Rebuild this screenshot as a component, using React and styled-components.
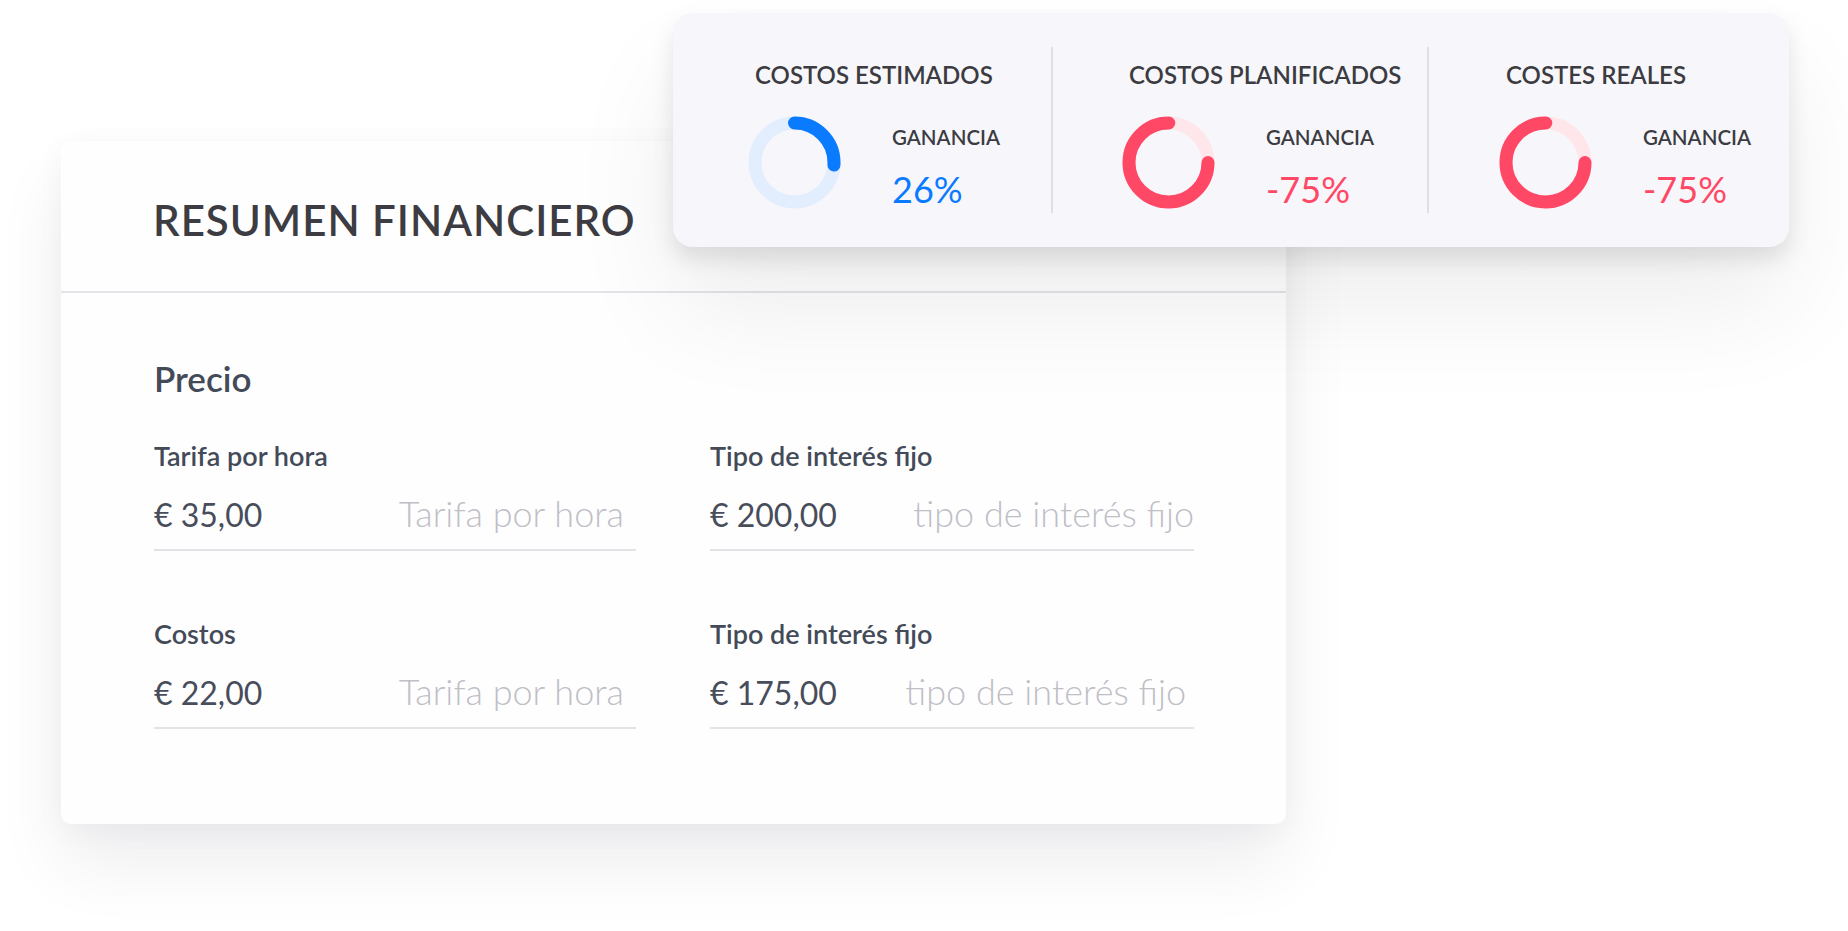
import React from "react";
import styled, { createGlobalStyle } from "styled-components";

const Global = createGlobalStyle`
  html, body { margin: 0; padding: 0; background: #ffffff; }
  body { font-family: Lato, "Noto Sans", sans-serif; -webkit-font-smoothing: antialiased; }
  * { box-sizing: border-box; }
`;

const Stage = styled.div`
  position: relative;
  width: 1848px;
  height: 931px;
  overflow: hidden;
  padding: 141px 0 0 61px;
`;

const MainCard = styled.section`
  width: 1225px;
  height: 683px;
  background: #fefeff;
  border-radius: 10px;
  box-shadow: 0 40px 70px rgba(20, 20, 40, 0.07), 0 6px 30px rgba(20, 20, 40, 0.04);
  display: flex;
  flex-direction: column;
`;

const CardHeader = styled.header`
  height: 152px;
  flex: none;
  display: flex;
  align-items: center;
  padding: 9px 0 0 92px;
  border-bottom: 2px solid #e3e3e8;
`;

const CardTitle = styled.h1`
  margin: 0;
  font-size: 42px;
  line-height: 1.2;
  font-weight: 600;
  letter-spacing: 1px;
  color: #3c3c42;
`;

const CardBody = styled.div`
  padding: 64px 92px 0 93px;
`;

const SectionTitle = styled.h2`
  margin: 0 0 42px;
  font-size: 35px;
  line-height: 1.2;
  font-weight: 600;
  color: #434a58;
`;

const FieldGrid = styled.div`
  display: grid;
  grid-template-columns: 482px 484px;
  column-gap: 74px;
  row-gap: 68px;
`;

const Field = styled.div`
  display: flex;
  flex-direction: column;
`;

const FieldLabel = styled.label`
  font-size: 27px;
  line-height: 30px;
  font-weight: 600;
  color: #434a58;
`;

const InputRow = styled.div`
  margin-top: 23px;
  display: flex;
  justify-content: space-between;
  align-items: baseline;
  padding: 0 ${(p) => p.$inset}px 15px 0;
  border-bottom: 2px solid #e2e2e7;
`;

const Value = styled.span`
  font-size: 32px;
  line-height: 38px;
  font-weight: 400;
  color: #474d5a;
`;

const Hint = styled.span`
  font-size: 36px;
  line-height: 38px;
  font-weight: 300;
  color: #bfbfc6;
`;

const StatsCard = styled.aside`
  position: absolute;
  left: 673px;
  top: 13px;
  width: 1116px;
  height: 234px;
  background: #f7f7fb;
  border-radius: 20px;
  box-shadow: 0 12px 22px rgba(0, 0, 0, 0.1), 0 60px 110px rgba(0, 0, 0, 0.07);
  padding: 34px 0;
  display: grid;
  grid-template-columns: 378px 376px 1fr;
`;

const Stat = styled.div`
  padding: 13px 0 0 ${(p) => p.$pad}px;
  border-left: ${(p) => (p.$first ? "none" : "2px solid #dfdfe5")};
  display: flex;
  flex-direction: column;
`;

const StatTitle = styled.div`
  margin-left: 7px;
  font-size: 24px;
  line-height: 30px;
  font-weight: 600;
  color: #3b3b41;
  white-space: nowrap;
`;

const StatRow = styled.div`
  margin-top: 26px;
  display: flex;
  align-items: flex-start;
  gap: 51px;
`;

const StatText = styled.div`
  display: flex;
  flex-direction: column;
  padding-top: 9px;
  gap: 18px;
`;

const StatLabel = styled.div`
  font-size: 20.5px;
  line-height: 25px;
  font-weight: 600;
  color: #3b3b41;
`;

const StatValue = styled.div`
  font-size: 36px;
  line-height: 42px;
  font-weight: 400;
  color: ${(p) => p.$color};
`;

const Donut = ({ pct, color, track, reverse }) => {
  const r = 39.5;
  const C = 2 * Math.PI * r;
  const len = C * pct;
  return (
    <svg width="93" height="93" viewBox="0 0 93 93" style={{ flex: "none" }}>
      <circle cx="46.5" cy="46.5" r={r} fill="none" stroke={track} strokeWidth="13" />
      <circle
        cx="46.5"
        cy="46.5"
        r={r}
        fill="none"
        stroke={color}
        strokeWidth="13"
        strokeLinecap="round"
        strokeDasharray={`${len} ${C}`}
        transform={reverse ? "rotate(0 46.5 46.5)" : "rotate(-90 46.5 46.5)"}
      />
    </svg>
  );
};

const BLUE = "#0a7bff";
const RED = "#ff4866";

const stats = [
  { title: "COSTOS ESTIMADOS", value: "26%", color: BLUE, track: "#e2edfd", pct: 0.26, reverse: false, pad: 75 },
  { title: "COSTOS PLANIFICADOS", value: "-75%", color: RED, track: "#ffe6ea", pct: 0.75, reverse: true, pad: 69 },
  { title: "COSTES REALES", value: "-75%", color: RED, track: "#ffe6ea", pct: 0.75, reverse: true, pad: 70 },
];

const fields = [
  { label: "Tarifa por hora", value: "€ 35,00", hint: "Tarifa por hora", inset: 12 },
  { label: "Tipo de interés fijo", value: "€ 200,00", hint: "tipo de interés fijo", inset: 0 },
  { label: "Costos", value: "€ 22,00", hint: "Tarifa por hora", inset: 12 },
  { label: "Tipo de interés fijo", value: "€ 175,00", hint: "tipo de interés fijo", inset: 8 },
];

export default function App() {
  return (
    <>
      <Global />
      <Stage>
        <MainCard>
          <CardHeader>
            <CardTitle>RESUMEN FINANCIERO</CardTitle>
          </CardHeader>
          <CardBody>
            <SectionTitle>Precio</SectionTitle>
            <FieldGrid>
              {fields.map((f, i) => (
                <Field key={i}>
                  <FieldLabel>{f.label}</FieldLabel>
                  <InputRow $inset={f.inset}>
                    <Value>{f.value}</Value>
                    <Hint>{f.hint}</Hint>
                  </InputRow>
                </Field>
              ))}
            </FieldGrid>
          </CardBody>
        </MainCard>
        <StatsCard>
          {stats.map((s, i) => (
            <Stat key={i} $first={i === 0} $pad={s.pad}>
              <StatTitle>{s.title}</StatTitle>
              <StatRow>
                <Donut pct={s.pct} color={s.color} track={s.track} reverse={s.reverse} />
                <StatText>
                  <StatLabel>GANANCIA</StatLabel>
                  <StatValue $color={s.color}>{s.value}</StatValue>
                </StatText>
              </StatRow>
            </Stat>
          ))}
        </StatsCard>
      </Stage>
    </>
  );
}
